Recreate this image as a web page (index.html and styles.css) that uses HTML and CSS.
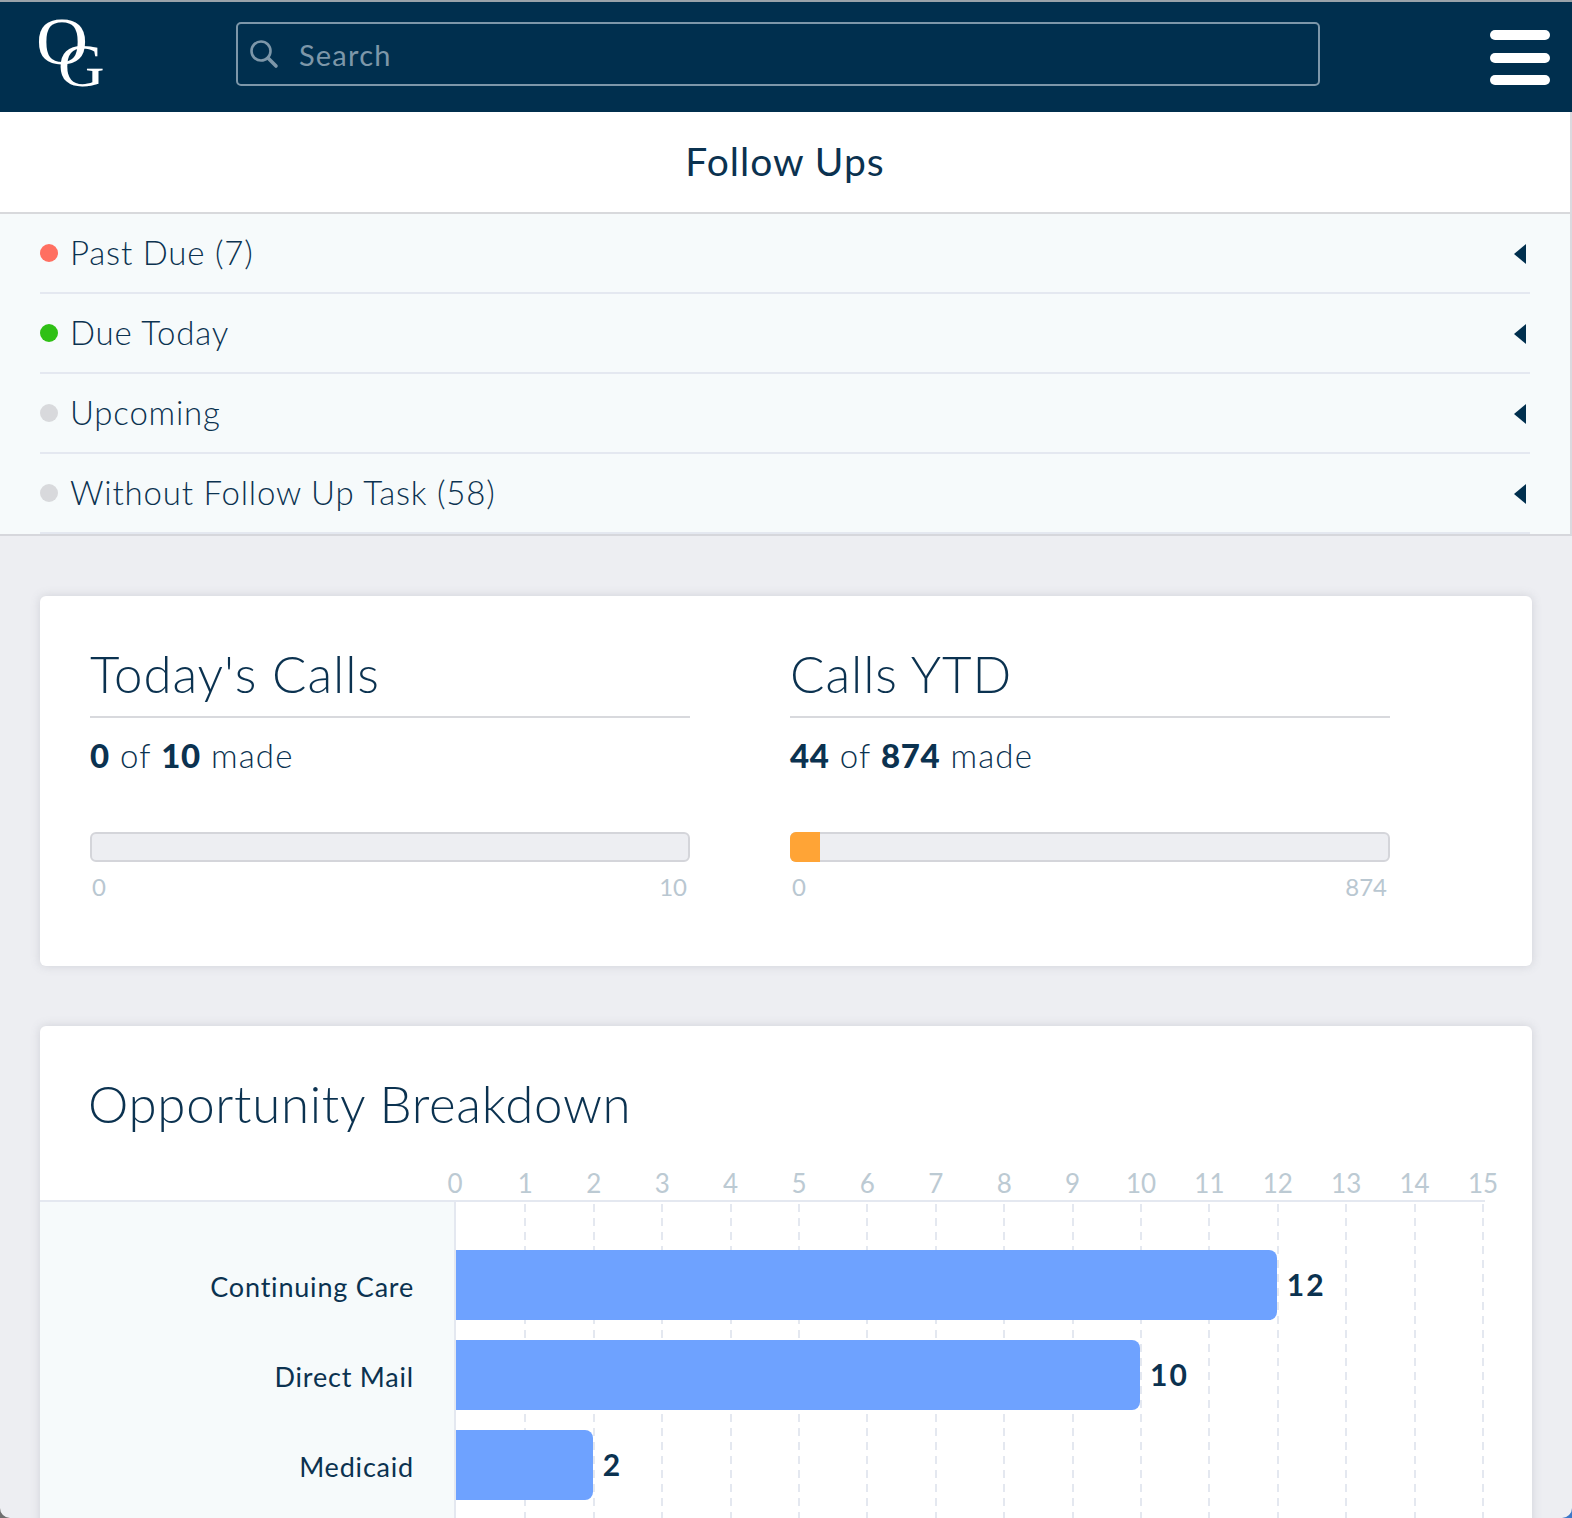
FILE: index.html
```html
<!DOCTYPE html>
<html>
  <head>
    <title>Follow Ups</title>
    <link rel="stylesheet" href="styles.css">
  </head>
  <body>
    <!-- Top bar -->
    <header class="topbar">
      <div class="logo"><span class="logo-o">O</span><span class="logo-g">G</span></div>
      <div class="search">
        <svg class="search-icon" viewBox="0 0 30 30" width="30" height="30">
          <circle cx="12" cy="12" r="9.5" fill="none" stroke="#7d97a9" stroke-width="2.6"/>
          <line x1="19" y1="19" x2="27" y2="27" stroke="#7d97a9" stroke-width="3.6" stroke-linecap="round"/>
        </svg>
        <span class="search-text">Search</span>
      </div>
      <div class="menu"><span></span><span></span><span></span></div>
    </header>

    <!-- Follow ups -->
    <section class="followups">
      <h1>Follow Ups</h1>
      <ul class="fu-list">
        <li><i class="dot red"></i><span class="fu-label">Past Due (7)</span><i class="caret"></i></li>
        <li><i class="dot green"></i><span class="fu-label">Due Today</span><i class="caret"></i></li>
        <li><i class="dot grey"></i><span class="fu-label">Upcoming</span><i class="caret"></i></li>
        <li><i class="dot grey"></i><span class="fu-label">Without Follow Up Task (58)</span><i class="caret"></i></li>
      </ul>
    </section>

    <!-- Calls -->
    <section class="card calls">
      <div class="call-col">
        <h2>Today's Calls</h2>
        <p class="made"><b>0</b> of <b>10</b> made</p>
        <div class="progress"></div>
        <div class="scale"><span>0</span><span>10</span></div>
      </div>
      <div class="call-col">
        <h2>Calls YTD</h2>
        <p class="made"><b>44</b> of <b>874</b> made</p>
        <div class="progress"><div class="progress-fill" style="width: 5%"></div></div>
        <div class="scale"><span>0</span><span>874</span></div>
      </div>
    </section>

    <!-- Opportunity chart -->
    <section class="card chart">
      <h2>Opportunity Breakdown</h2>
      <div class="axis" id="axis"></div>
      <div class="chart-body">
        <div class="chart-labels">
          <div>Continuing Care</div>
          <div>Direct Mail</div>
          <div>Medicaid</div>
        </div>
        <div class="plot" id="plot"></div>
      </div>
    </section>

    <div class="corner left"></div>
    <div class="corner right"></div>

    <script>
      const step = 68.4;
      const axis = document.querySelector("#axis");
      const plot = document.querySelector("#plot");

      // Tick numbers and dashed grid lines
      for (let n = 0; n <= 15; n++) {
        const tick = document.createElement("span");
        tick.textContent = n;
        tick.style.left = (n === 0 ? -2 : n * step) + "px";
        axis.appendChild(tick);

        if (n > 0) {
          const line = document.createElement("i");
          line.classList.add("gridline");
          line.style.left = n * step + "px";
          plot.appendChild(line);
        }
      }

      // Bars
      [12, 10, 2].forEach((value) => {
        const row = document.createElement("div");
        row.classList.add("bar-row");
        row.innerHTML = `<div class="bar" style="width: ${value * step}px"></div><b>${value}</b>`;
        plot.appendChild(row);
      });
    </script>
  </body>
</html>
```

FILE: styles.css
```css
html,
body {
  margin: 0;
  height: 1518px;
  overflow: hidden;
}
body {
  position: relative;
  background-color: #edeef2;
  font-family: "Lato", "Open Sans", sans-serif;
  color: #0b3250;
}
h1,
h2,
p,
ul {
  margin: 0;
  padding: 0;
}

/* top bar */
.topbar {
  display: flex;
  align-items: flex-start;
  height: 110px;
  background-color: #002f4e;
  border-top: 2px solid #9aa3aa;
}
.logo {
  position: relative;
  width: 236px;
  flex: none;
  font-family: "Liberation Serif", serif;
  color: white;
}
.logo-o {
  position: absolute;
  left: 36px;
  top: 4px;
  font-size: 68px;
  line-height: 70px;
  transform: scaleX(1.06);
  transform-origin: left;
}
.logo-g {
  position: absolute;
  left: 58px;
  top: 33px;
  font-size: 62px;
  line-height: 60px;
  transform: scaleX(1.04);
  transform-origin: left;
}
.search {
  display: flex;
  align-items: center;
  box-sizing: border-box;
  width: 1084px;
  height: 64px;
  margin-top: 20px;
  padding-left: 11px;
  border: 2px solid #7d97a9;
  border-radius: 5px;
}
.search-text {
  margin-left: 20px;
  padding-top: 1px;
  font-size: 29px;
  letter-spacing: 1.2px;
  color: #7d97a9;
}
.menu {
  display: flex;
  flex-direction: column;
  gap: 12.5px;
  margin: 28px 0 0 170px;
}
.menu span {
  display: block;
  width: 60px;
  height: 10px;
  border-radius: 5px;
  background-color: white;
}

/* follow ups */
.followups {
  background-color: white;
  border-right: 2px solid #dadadf;
  border-bottom: 2px solid #d6d7dc;
}
.followups h1 {
  height: 100px;
  line-height: 98px;
  text-align: center;
  font-size: 39px;
  font-weight: 400;
  letter-spacing: 1px;
  border-bottom: 2px solid #d8d9dc;
}
.fu-list {
  list-style: none;
  padding: 0 40px;
  background-color: #f6fafb;
}
.fu-list li {
  display: flex;
  align-items: center;
  box-sizing: border-box;
  height: 80px;
  padding-right: 4px;
  border-bottom: 2px solid #e4e8f0;
}
.dot {
  width: 18px;
  height: 18px;
  border-radius: 50%;
  margin-right: 12px;
}
.dot.red {
  background-color: #ff6f61;
}
.dot.green {
  background-color: #2fc015;
}
.dot.grey {
  background-color: #d8d9dc;
}
.fu-label {
  flex: 1;
  padding-bottom: 2px;
  font-size: 33px;
  font-weight: 300;
  letter-spacing: 0.8px;
}
.caret {
  width: 0;
  height: 0;
  margin-top: 2px;
  border-top: 10px solid transparent;
  border-bottom: 10px solid transparent;
  border-right: 12px solid #002f4e;
}

/* cards */
.card {
  width: 1492px;
  margin: 60px 0 0 40px;
  background-color: white;
  border-radius: 6px;
  box-shadow: 0 0 10px rgba(120, 125, 140, 0.25);
}
.card h2 {
  font-size: 51px;
  font-weight: 300;
  letter-spacing: 0.7px;
}
.calls {
  display: flex;
  gap: 100px;
  box-sizing: border-box;
  height: 370px;
  padding: 49px 50px 0;
}
.call-col {
  width: 600px;
}
.call-col h2 {
  height: 71px;
  line-height: 58px;
  letter-spacing: 0.9px;
  border-bottom: 2px solid #d8d9dd;
}
.made {
  margin-top: 18px;
  height: 96px;
  line-height: 39px;
  font-size: 33px;
  font-weight: 300;
  letter-spacing: 1.2px;
}
.made b {
  font-weight: 900;
  letter-spacing: 0.6px;
}
.progress {
  box-sizing: border-box;
  height: 30px;
  overflow: visible;
  background-color: #edeef2;
  border: 2px solid #d4d5da;
  border-radius: 6px;
}
.progress-fill {
  height: 30px;
  margin: -2px 0 0 -2px;
  background-color: #ffa436;
  border-radius: 6px 0 0 6px;
}
.scale {
  display: flex;
  justify-content: space-between;
  padding: 0 3px 0 2px;
  margin-top: 10px;
  font-size: 24px;
  color: #b9c7d1;
}

/* chart */
.chart {
  height: 560px;
  overflow: hidden;
}
.chart h2 {
  padding: 49px 0 0 48px;
  height: 77px;
  line-height: 58px;
}
.axis {
  position: relative;
  height: 48px;
  width: 1445px;
  border-bottom: 2px solid #e4e8f0;
}
.axis span {
  position: absolute;
  left: 0;
  bottom: 0;
  width: 60px;
  margin-left: 387px;
  text-align: center;
  font-size: 26px;
  line-height: 34px;
  color: #bccad3;
}
.chart-body {
  display: flex;
}
.chart-labels {
  box-sizing: border-box;
  width: 416px;
  height: 320px;
  flex: none;
  padding: 48px 40px 0 0;
  border-right: 2px solid #e4e8f0;
  background-color: #f6fafb;
  text-align: right;
  font-size: 27px;
  font-weight: 400;
  letter-spacing: 0.8px;
}
.chart-labels div {
  height: 90px;
  line-height: 74px;
}
.plot {
  position: relative;
  flex: 1;
  padding-top: 48px;
}
.gridline {
  position: absolute;
  top: 2px;
  bottom: 0;
  width: 2px;
  background: repeating-linear-gradient(#e4e8f0 0 8px, transparent 8px 14px);
}
.bar-row {
  position: relative;
  display: flex;
  align-items: center;
  gap: 10px;
  height: 70px;
  margin-bottom: 20px;
}
.bar {
  height: 70px;
  background-color: #6ea2ff;
  border-radius: 0 8px 8px 0;
}
.bar-row b {
  padding-bottom: 2px;
  font-size: 30px;
  font-weight: 700;
  letter-spacing: 2px;
}

/* window corners */
.corner {
  position: absolute;
  bottom: 0;
  width: 10px;
  height: 10px;
}
.corner.left {
  left: 0;
  background-color: #6f6f6f;
  clip-path: path("M0 0 A10 10 0 0 0 10 10 L0 10 Z");
}
.corner.right {
  right: 0;
  background-color: #3c78c8;
  clip-path: path("M10 0 A10 10 0 0 1 0 10 L10 10 Z");
}
```
